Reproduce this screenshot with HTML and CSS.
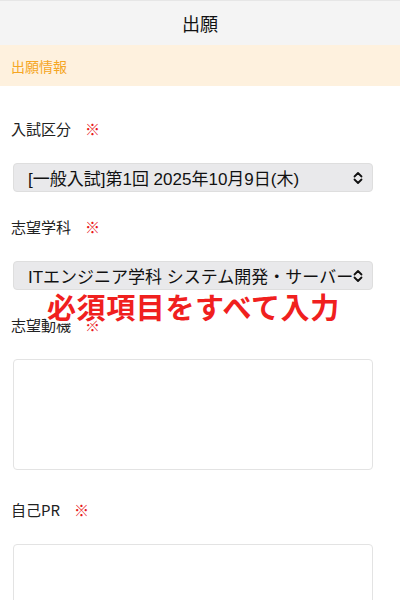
FILE: index.html
```html
<!DOCTYPE html>
<html lang="ja">
<head>
    <meta charset="UTF-8">
    <meta name="viewport" content="width=device-width, initial-scale=1.0">
    <title>出願</title>
    <link rel="stylesheet" href="styles.css">
</head>
<body>
    <header class="cabecalho">
        <h1>出願</h1>
    </header>

    <!-- Seção -->
    <div class="secao">出願情報</div>

    <form class="formulario">
        <div class="campo">
            <div class="rotulo">入試区分<span class="obrigatorio">※</span></div>
            <div class="seletor">
                <span class="seletor-texto">[一般入試]第1回 2025年10月9日(木)</span>
                <svg class="seta" width="12" height="14" viewBox="0 0 12 14">
                    <path d="M2.5 5.5 L6 2 L9.5 5.5 M2.5 8.5 L6 12 L9.5 8.5" fill="none" stroke="#111" stroke-width="1.8" stroke-linecap="round" stroke-linejoin="round"/>
                </svg>
            </div>
        </div>

        <div class="campo">
            <div class="rotulo">志望学科<span class="obrigatorio">※</span></div>
            <div class="seletor">
                <span class="seletor-texto">ITエンジニア学科 システム開発・サーバーエンジニアコース</span>
                <svg class="seta" width="12" height="14" viewBox="0 0 12 14">
                    <path d="M2.5 5.5 L6 2 L9.5 5.5 M2.5 8.5 L6 12 L9.5 8.5" fill="none" stroke="#111" stroke-width="1.8" stroke-linecap="round" stroke-linejoin="round"/>
                </svg>
            </div>
        </div>

        <div class="campo campo-texto">
            <div class="rotulo">志望動機<span class="obrigatorio">※</span></div>
            <textarea class="caixa"></textarea>
        </div>

        <div class="campo campo-texto">
            <div class="rotulo">自己PR<span class="obrigatorio">※</span></div>
            <textarea class="caixa"></textarea>
        </div>
    </form>

    <!-- Aviso sobreposto -->
    <div class="aviso">必須項目をすべて入力</div>
</body>
</html>
```

FILE: styles.css
```css
* {
    margin: 0;
    padding: 0;
    box-sizing: border-box;
}

body {
    font-family: "Noto Sans CJK JP", "Noto Sans", sans-serif;
    background-color: #fff;
    color: #222;
    width: 400px;
    height: 600px;
    overflow: hidden;
    position: relative;
}

.cabecalho {
    height: 45px;
    background-color: #f4f4f4;
    border-top: 1px solid #e6e6e6;
    display: flex;
    justify-content: center;
    align-items: center;
}

.cabecalho h1 {
    font-size: 18px;
    font-weight: 400;
    color: #111;
}

.secao {
    height: 41px;
    background-color: #fef1de;
    color: #f5a623;
    font-size: 14px;
    padding-left: 11px;
    display: flex;
    align-items: center;
}

.formulario {
    padding: 8px 27px 0 13px;
}

.campo {
    margin-top: 25px;
}

.campo-texto + .campo-texto {
    margin-top: 30px;
}

.rotulo {
    height: 20px;
    line-height: 20px;
    font-size: 15px;
    color: #222;
    margin-left: -2px;
    margin-bottom: 24px;
    display: flex;
    align-items: center;
}

.obrigatorio {
    color: #e8191b;
    font-size: 15px;
    margin-left: 14px;
}

.seletor {
    height: 29px;
    background-color: #e9e9eb;
    border: 1px solid #dedede;
    border-radius: 4px;
    display: flex;
    align-items: center;
    padding: 0 8px 0 14px;
    gap: 0;
}

.seletor-texto {
    flex: 1;
    font-family: "Liberation Sans", "Noto Sans CJK JP", sans-serif;
    font-size: 17px;
    color: #111;
    white-space: nowrap;
    overflow: hidden;
}

.seta {
    flex-shrink: 0;
}

.caixa {
    display: block;
    width: 100%;
    height: 111px;
    border: 1.5px solid #e3e3e3;
    border-radius: 4px;
    resize: none;
    background-color: #fff;
    font-family: inherit;
}

.aviso {
    position: absolute;
    top: 285px;
    left: 47px;
    font-size: 29px;
    font-weight: 700;
    color: #f0201e;
    letter-spacing: 0.6px;
    -webkit-text-stroke: 5px #fff;
    paint-order: stroke fill;
    white-space: nowrap;
}
```
